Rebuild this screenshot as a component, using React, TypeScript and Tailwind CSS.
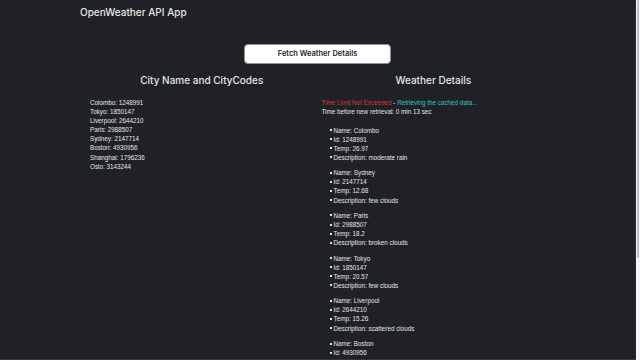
import React from 'react';

const cities = [
  ['Colombo', '1248991'],
  ['Tokyo', '1850147'],
  ['Liverpool', '2644210'],
  ['Paris', '2988507'],
  ['Sydney', '2147714'],
  ['Boston', '4930956'],
  ['Shanghai', '1796236'],
  ['Oslo', '3143244'],
];

const weather = [
  { name: 'Colombo', id: '1248991', temp: '26.97', desc: 'moderate rain' },
  { name: 'Sydney', id: '2147714', temp: '12.68', desc: 'few clouds' },
  { name: 'Paris', id: '2988507', temp: '18.2', desc: 'broken clouds' },
  { name: 'Tokyo', id: '1850147', temp: '20.57', desc: 'few clouds' },
  { name: 'Liverpool', id: '2644210', temp: '15.26', desc: 'scattered clouds' },
  { name: 'Boston', id: '4930956', temp: '3.1', desc: 'clear sky' },
];

const Item = ({ children }: { children: React.ReactNode }) => (
  <li className="flex items-center gap-[2px]">
    <span className="w-[2px] h-[2px] bg-current" />
    <span>{children}</span>
  </li>
);

export default function App() {
  return (
    <div
      className="h-screen flex overflow-hidden bg-[#1f2126] text-[#e4e5e7]"
      style={{ fontFamily: '"Liberation Sans", Arial, sans-serif' }}
    >
      {/* page */}
      <main className="flex-1 overflow-hidden border-b border-[#34363b]">
        <header className="px-20 pt-[5px] h-[44px]">
          <h1 className="font-['Inter'] font-medium text-[10px] leading-[14px]">OpenWeather API App</h1>
        </header>

        <div className="flex justify-center">
          <button className="w-[147px] h-[20px] rounded-[4px] bg-white border border-[#8e9095] text-[#1f2126] font-['Inter'] text-[7.5px] font-semibold">
            Fetch Weather Details
          </button>
        </div>

        <div className="mx-auto w-[463px] grid grid-cols-2 pt-[9px]">
          <section className="px-1">
            <h2 className="text-center font-['Inter'] font-medium text-[10px] leading-[14px]">City Name and CityCodes</h2>
            <ul className="mt-[11px] text-[6.3px] leading-[9.1px]">
              {cities.map(([n, c]) => (
                <li key={n}>
                  {n}: {c}
                </li>
              ))}
            </ul>
          </section>

          <section className="px-1">
            <h2 className="text-center font-['Inter'] font-medium text-[10px] leading-[14px]">Weather Details</h2>
            <div className="mt-[11px] text-[6.3px] leading-[9px]">
              <p>
                <span className="text-[#d2382f]">Time Limit Not Exceeded</span>
                <span> - </span>
                <span className="text-[#35c2c0]">Retrieving the cached data...</span>
              </p>
              <p>Time before new retrieval: 0 min 13 sec</p>
            </div>
            <div className="mt-[9.6px] flex flex-col gap-[6.3px]">
              {weather.map((w) => (
                <ul key={w.name} className="pl-[8px] text-[6.3px] leading-[9.1px]">
                  <Item>Name: {w.name}</Item>
                  <Item>Id: {w.id}</Item>
                  <Item>Temp: {w.temp}</Item>
                  <Item>Description: {w.desc}</Item>
                </ul>
              ))}
            </div>
          </section>
        </div>
      </main>

      {/* scrollbar */}
      <div className="w-[5px] flex flex-col bg-[#f4f4f4] border-l border-[#2a2c30]">
        <div className="h-[258px] mx-px bg-[#c4c4c4] rounded-full" />
      </div>
    </div>
  );
}
